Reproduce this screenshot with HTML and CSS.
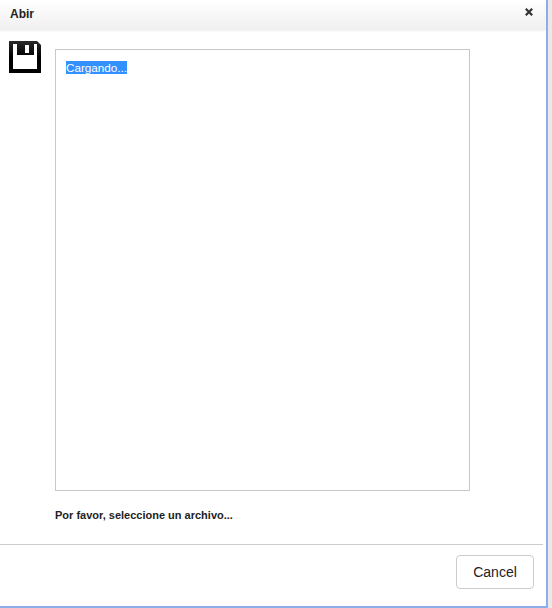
FILE: index.html
```html
<!DOCTYPE html>
<html lang="es">
<head>
  <meta charset="UTF-8">
  <meta name="viewport" content="width=device-width, initial-scale=1.0">
  <title>Abir</title>
  <link rel="stylesheet" href="styles.css">
</head>
<body>
  <div class="dialog">
    <div class="dialog-header">
      <span class="dialog-title">Abir</span>
      <svg class="close-icon" width="8" height="8" viewBox="0 0 8 8" aria-label="Cerrar">
        <path d="M0.8 0.8 L7.2 7.2 M7.2 0.8 L0.8 7.2" stroke="#333" stroke-width="2.2" fill="none"/>
      </svg>
    </div>
    <div class="dialog-body">
      <svg class="file-icon" width="32" height="32" viewBox="0 0 32 32">
        <defs>
          <linearGradient id="floppy" x1="0" y1="0" x2="0" y2="1">
            <stop offset="0" stop-color="#2a2a2a"/>
            <stop offset="0.5" stop-color="#000"/>
          </linearGradient>
        </defs>
        <path fill-rule="evenodd" fill="url(#floppy)" d="M0 0H28L32 4V32H0Z M4 3V28H28V3H25V14H8V3Z M16 4V12H20V4Z"/>
      </svg>
      <div class="file-panel">
        <div class="file-list"><span class="loading">Cargando...</span></div>
        <p class="hint">Por favor, seleccione un archivo...</p>
      </div>
    </div>
    <div class="dialog-footer">
      <button class="btn-cancel">Cancel</button>
    </div>
  </div>
</body>
</html>
```

FILE: styles.css
```css
html, body {
  height: 100%;
}
body {
  margin: 0;
  background: #e9e9e9;
  font-family: "Liberation Sans", Arial, sans-serif;
  color: #222;
}
.dialog {
  box-sizing: border-box;
  width: 548px;
  height: 608px;
  display: flex;
  flex-direction: column;
  background: #fff;
  border-right: 2px solid #8eaee8;
  border-bottom: 2px solid #8eaee8;
}
.dialog-header {
  height: 30px;
  flex: none;
  display: flex;
  align-items: center;
  justify-content: space-between;
  padding: 0 13px 6px 10px;
  box-sizing: border-box;
  background: linear-gradient(#fff, #f0f0f0);
  box-shadow: 0 1px 2px rgba(0,0,0,0.06);
}
.dialog-title {
  font-size: 12px;
  font-weight: bold;
  margin-top: 4px;
}
.dialog-body {
  flex: 1;
  display: flex;
  align-items: flex-start;
  padding: 11px 0 0 9px;
}
.file-icon {
  flex: none;
}
.file-panel {
  margin: 8px 0 0 14px;
}
.file-list {
  box-sizing: border-box;
  width: 415px;
  height: 442px;
  border: 1px solid #c8c8c8;
  padding: 11px 10px;
  font-size: 11.7px;
  line-height: 13px;
}
.loading {
  background: #3390ff;
  color: #fff;
}
.hint {
  margin: 18px 0 0;
  font-size: 11px;
  font-weight: bold;
}
.dialog-footer {
  flex: none;
  height: 62px;
  box-sizing: border-box;
  border-top: 1px solid #ccc;
  margin-right: 3px;
  padding: 10px 9px 0 0;
  display: flex;
  justify-content: flex-end;
  align-items: flex-start;
}
.btn-cancel {
  width: 78px;
  height: 34px;
  background: #fff;
  border: 1px solid #ccc;
  border-radius: 4px;
  font-family: "Liberation Sans", Arial, sans-serif;
  font-size: 14px;
  color: #222;
}
```
